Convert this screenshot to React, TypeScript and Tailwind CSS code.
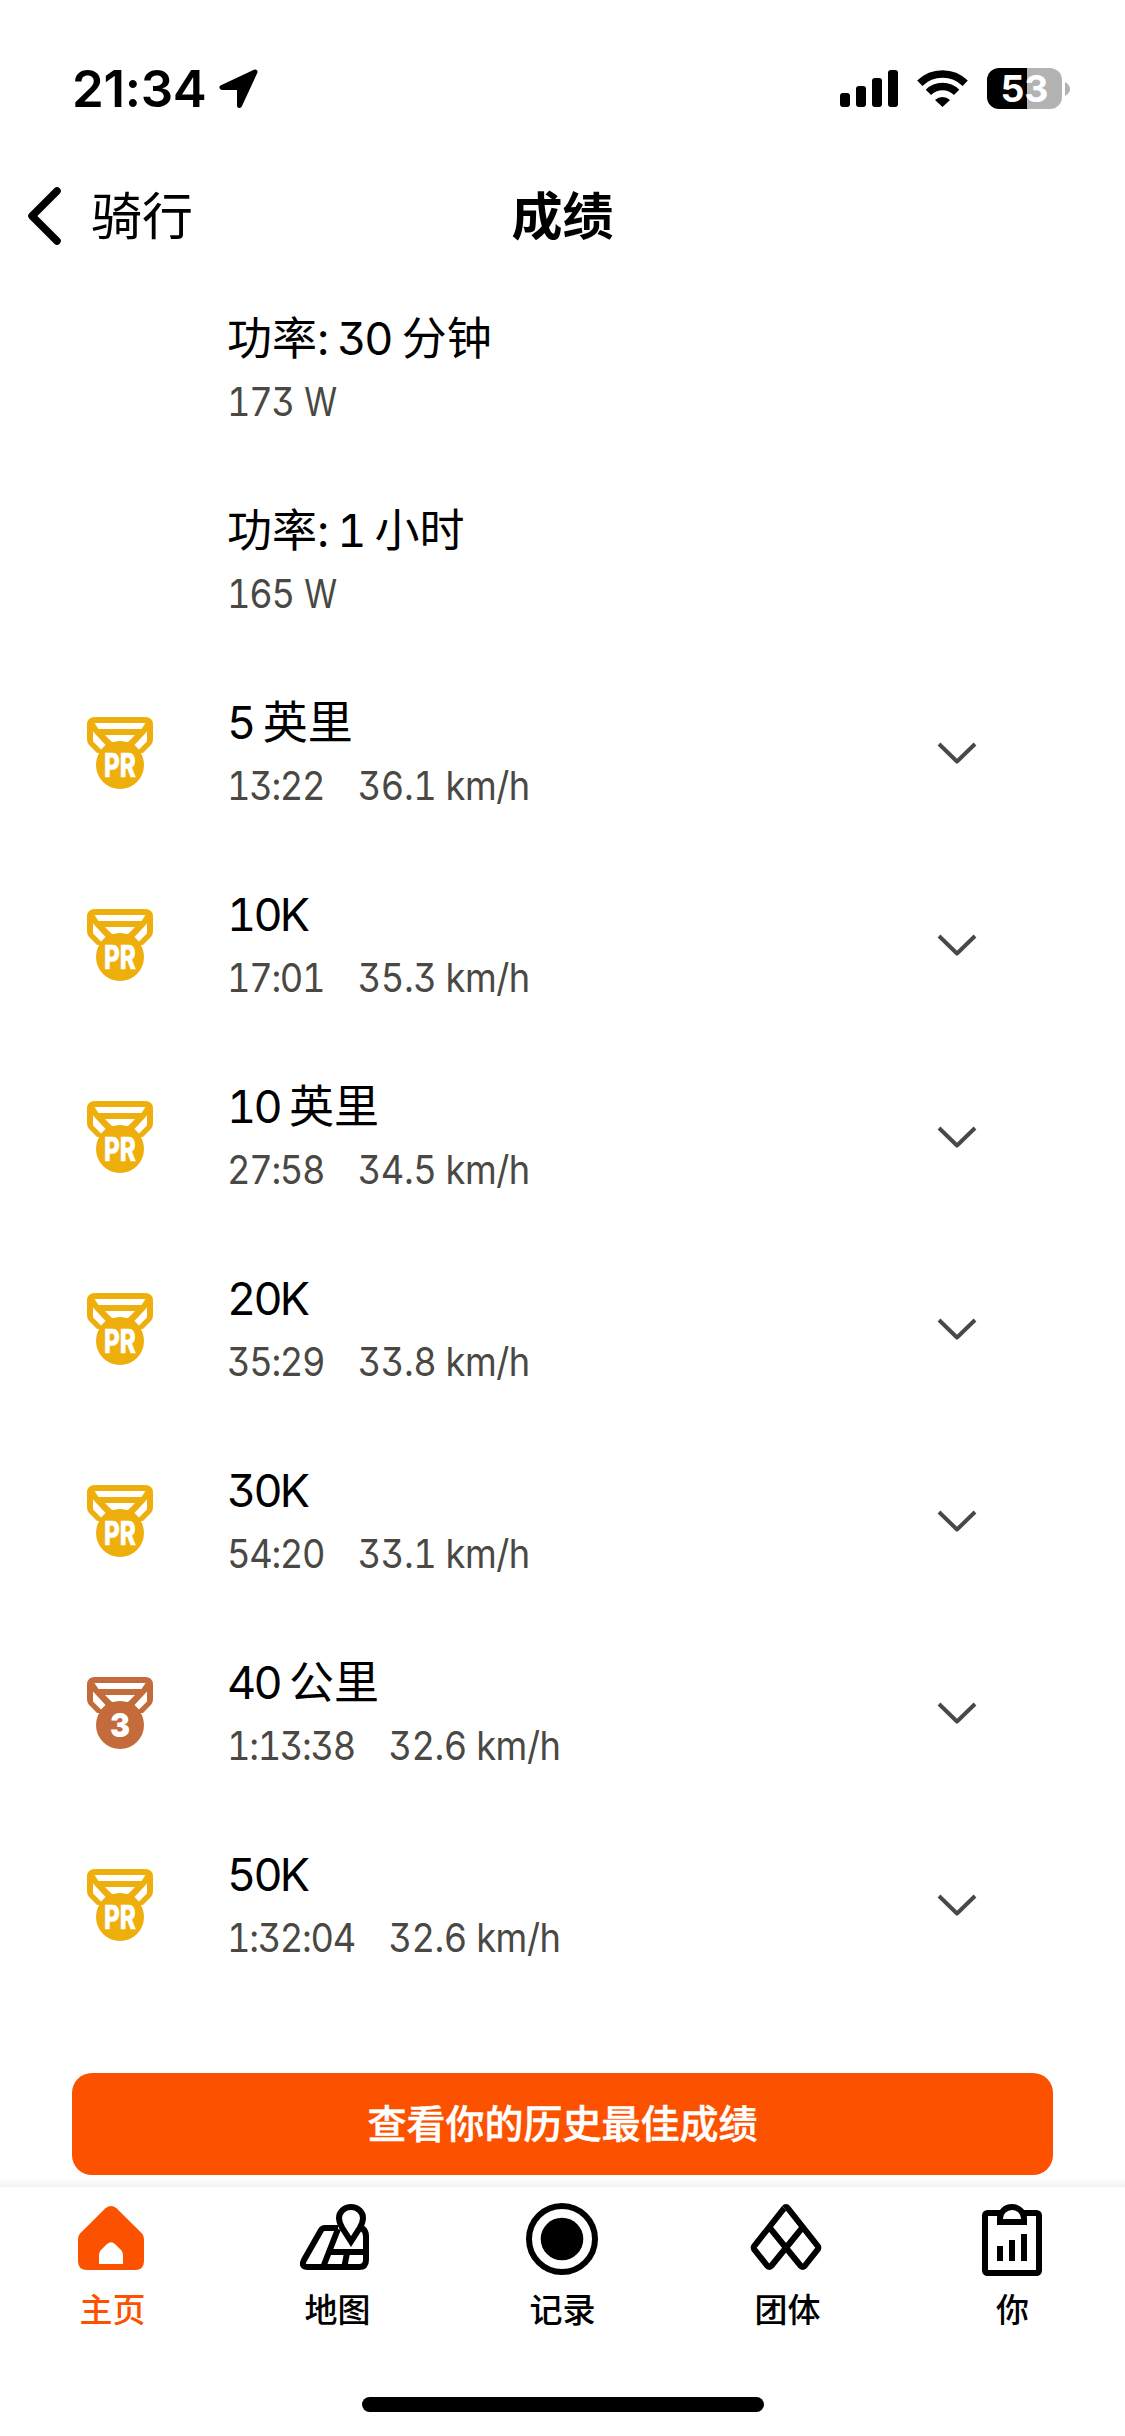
import React from 'react';

interface Effort {
  title: string;
  value: string;
  unit?: string;
  speed?: string;
  medal?: 'PR' | '3';
}

const efforts: Effort[] = [
  { title: '功率: 30 分钟', value: '173', unit: 'W' },
  { title: '功率: 1 小时', value: '165', unit: 'W' },
  { title: '5 英里', value: '13:22', speed: '36.1 km/h', medal: 'PR' },
  { title: '10K', value: '17:01', speed: '35.3 km/h', medal: 'PR' },
  { title: '10 英里', value: '27:58', speed: '34.5 km/h', medal: 'PR' },
  { title: '20K', value: '35:29', speed: '33.8 km/h', medal: 'PR' },
  { title: '30K', value: '54:20', speed: '33.1 km/h', medal: 'PR' },
  { title: '40 公里', value: '1:13:38', speed: '32.6 km/h', medal: '3' },
  { title: '50K', value: '1:32:04', speed: '32.6 km/h', medal: 'PR' },
];

const runTracking = (part: string) => {
  if (/[\u4e00-\u9fff]/.test(part)) return 'tracking-normal';
  return part.startsWith(':') ? 'tracking-[-2px]' : 'tracking-[-2.8px]';
};

// Latin runs are set tighter than the Chinese ones
const EffortTitle: React.FC<{ text: string }> = ({ text }) => (
  <p className="text-[45px] leading-[66px] whitespace-pre">
    {text.split(/([\u4e00-\u9fff]+)/).filter(Boolean).map((part, i) => (
      <span key={i} className={runTracking(part)}>{part}</span>
    ))}
  </p>
);

const Medal: React.FC<{ kind: 'PR' | '3' }> = ({ kind }) => (
  <svg width="72" height="78" viewBox="0 0 72 78" className={kind === 'PR' ? 'text-[#eeae0c]' : 'text-[#c46b3c]'}>
    <path
      fill="currentColor"
      fillRule="evenodd"
      d="M11 3H61Q69 3 69 11V25Q69 28.5 67.3 30.5L59 39H13L4.7 30.5Q3 28.5 3 25V11Q3 3 11 3ZM10.5 9L14.5 15H57.5L61.5 9ZM21 21L28 28H44L51 21ZM9 17.5V27.5L17 35.5L21.5 31ZM63 17.5L50.5 31L55 35.5L63 27.5Z"
    />
    <circle cx="36" cy="51" r="24" fill="currentColor" />
    {kind === 'PR' ? (
      <text x="20" y="63" fontSize="33" fontWeight="800" fill="#fff" stroke="#fff" strokeWidth="0.4" textLength="32" lengthAdjust="spacingAndGlyphs">PR</text>
    ) : (
      <text x="26" y="63" fontSize="33" fontWeight="900" fill="#fff" textLength="20" lengthAdjust="spacingAndGlyphs">3</text>
    )}
  </svg>
);

const StatusBar = () => (
  <div className="h-[178px] pt-[68px] pl-[72px] pr-[55px] flex justify-between items-start">
    <div className="flex items-center h-[41px]">
      <span className="text-[51px] font-semibold tracking-[-0.3px] w-[147px] pt-[2px]">21:34</span>
      <svg width="40" height="40" viewBox="0 0 40 40">
        <path d="M36 3L3 18.5H20.5V36.5Z" stroke="#000" strokeWidth="5" strokeLinejoin="round" />
      </svg>
    </div>
    <div className="flex items-center h-[41px]">
      <svg width="58" height="37" viewBox="0 0 58 37">
        <rect x="0" y="23" width="10" height="14" rx="3" />
        <rect x="16" y="16" width="10" height="21" rx="3" />
        <rect x="32" y="8" width="10" height="29" rx="3" />
        <rect x="48" y="0" width="10" height="37" rx="3" />
      </svg>
      <svg width="51" height="37" viewBox="0 0 51 37" className="ml-[19px]" fill="none" stroke="#000" strokeWidth="7.5">
        <path d="M2.8 13.3A32.5 32.5 0 0 1 48.2 13.3" />
        <path d="M11.4 22.3A20 20 0 0 1 39.6 22.3" />
        <path d="M18 30A11 11 0 0 1 33 30L25.5 37Z" fill="#000" stroke="none" />
      </svg>
      <div className="ml-[19px] w-[75px] h-[41px] rounded-[12px] bg-[linear-gradient(to_right,#000_40px,#b3b3b3_40px)] flex items-center justify-center text-white text-[37.5px] font-bold leading-none">
        53
      </div>
      <svg width="5" height="14" viewBox="0 0 5 14" className="ml-[3px]">
        <path d="M0 0Q5 3 5 7T0 14Z" fill="#b3b3b3" />
      </svg>
    </div>
  </div>
);

const HomeIcon = () => (
  <svg width="75" height="75" viewBox="0 0 75 75">
    <path fill="#fc5200" d="M30.5 5.2Q36 0.8 41.5 5.2L67 30.5Q69 33 69 36V58Q69 67 60 67H12Q3 67 3 58V36Q3 33 5 30.5Z" />
    <path fill="#fff" d="M24 61V52Q24 49 26 47L32 41Q36 37.5 40 41L46 47Q48 49 48 52V61Z" />
  </svg>
);

const MapIcon = () => (
  <svg width="75" height="75" viewBox="0 0 75 75" fill="none" stroke="#000" strokeWidth="6">
    <path d="M38 25H25Q22 25 20.5 28L4 57Q0.5 64 8 64H59Q66 64 66 57V33Q66 28 62 25" />
    <path d="M38 26L23.5 63M29 49H66M47 50L44.5 63" />
    <path fill="#fff" d="M51 38.5L42 24.5Q39 19 39 15A12 11 0 0 1 63 15Q63 19 60 24.5Z" />
  </svg>
);

const RecordIcon = () => (
  <svg width="75" height="75" viewBox="0 0 75 75">
    <circle cx="37" cy="36" r="33" fill="none" stroke="#000" strokeWidth="6" />
    <circle cx="37" cy="36" r="21.3" />
  </svg>
);

const GroupsIcon = () => (
  <svg width="75" height="75" viewBox="0 0 75 75" fill="none" stroke="#000" strokeWidth="6" strokeLinejoin="round">
    <path d="M34.2 5.2Q36 3 37.8 5.2L67.6 42.8Q69 44.7 67.6 46.6L54.6 63Q52.7 64.6 50.8 63L19.5 24.5" />
    <path d="M34.2 5.2L4.4 42.8Q3 44.7 4.4 46.6L17.4 63Q19.3 64.6 21.2 63L52.5 24.5" />
  </svg>
);

const YouIcon = () => (
  <svg width="75" height="75" viewBox="0 0 75 75" fill="none" stroke="#000" strokeWidth="6">
    <rect x="10" y="10" width="54" height="60" rx="2.5" />
    <path fill="#fff" d="M25 19V15.5A12 11.5 0 0 1 49 15.5V19Z" />
    <path d="M25 43V58M37 37V58M49 31V58" />
  </svg>
);

const tabs = [
  { label: '主页', icon: HomeIcon, active: true },
  { label: '地图', icon: MapIcon },
  { label: '记录', icon: RecordIcon },
  { label: '团体', icon: GroupsIcon },
  { label: '你', icon: YouIcon },
];

export default function App() {
  return (
    <div className="w-[1125px] h-[2436px] bg-white text-black flex flex-col overflow-hidden font-['Inter','Noto_Sans_CJK_SC',sans-serif]">
      <StatusBar />

      <header className="h-[95px] px-[27px] grid grid-cols-3 items-start">
        <div className="flex items-center h-[76px]">
          <svg width="36" height="58" viewBox="0 0 36 58" fill="none" stroke="#000" strokeWidth="7.5" strokeLinecap="round" strokeLinejoin="round">
            <path d="M30 4L5 29L30 54" />
          </svg>
          <span className="ml-[28px] text-[51px] leading-[76px] pt-[2px]">骑行</span>
        </div>
        <h1 className="text-center text-[51px] leading-[76px] pt-[1px] font-semibold">成绩</h1>
      </header>

      <ul className="h-[1728px]">
        {efforts.map((e) => (
          <li key={e.title} className="h-[192px] pl-[84px] pr-[148px] flex items-center">
            <div className="w-[143px] shrink-0">{e.medal && <Medal kind={e.medal} />}</div>
            <div className="flex-1 [font-feature-settings:'tnum','cv09']">
              <EffortTitle text={e.title} />
              <p className="text-[39px] leading-[60px] text-[#494844] flex gap-[36px] origin-left scale-x-[0.93]">
                <span className="tracking-[-1.4px]">
                  {e.value}
                  {e.unit && <> <span className="inline-block ml-[2px] origin-left scale-x-[0.92]">{e.unit}</span></>}
                </span>
                {e.speed && <span className="tracking-[-0.5px]">{e.speed}</span>}
              </p>
            </div>
            {e.medal && (
              <svg width="40" height="22" viewBox="0 0 40 22" fill="none" stroke="#494844" strokeWidth="4" strokeLinejoin="round">
                <path d="M2 2L20 19.5L38 2" />
              </svg>
            )}
          </li>
        ))}
      </ul>

      <button className="mt-[72px] mx-[72px] h-[102px] shrink-0 rounded-[20px] bg-[#fc5200] text-white text-[39px] font-medium [-webkit-text-stroke:0.5px_white]">
        查看你的历史最佳成绩
      </button>
      <div className="mt-[3px] h-[9px] shrink-0 bg-linear-to-b from-white to-[#f2f2f2]" />

      <nav className="h-[210px] shrink-0 pt-[16px] grid grid-cols-5">
        {tabs.map(({ label, icon: Icon, active }) => (
          <div key={label} className="flex flex-col items-center">
            <Icon />
            <span className={`mt-[8px] text-[33px] leading-[48px] font-medium ${active ? 'text-[#fc5200]' : ''}`}>{label}</span>
          </div>
        ))}
      </nav>
      <div className="mx-auto w-[402px] h-[15px] shrink-0 rounded-full bg-black" />
    </div>
  );
}
